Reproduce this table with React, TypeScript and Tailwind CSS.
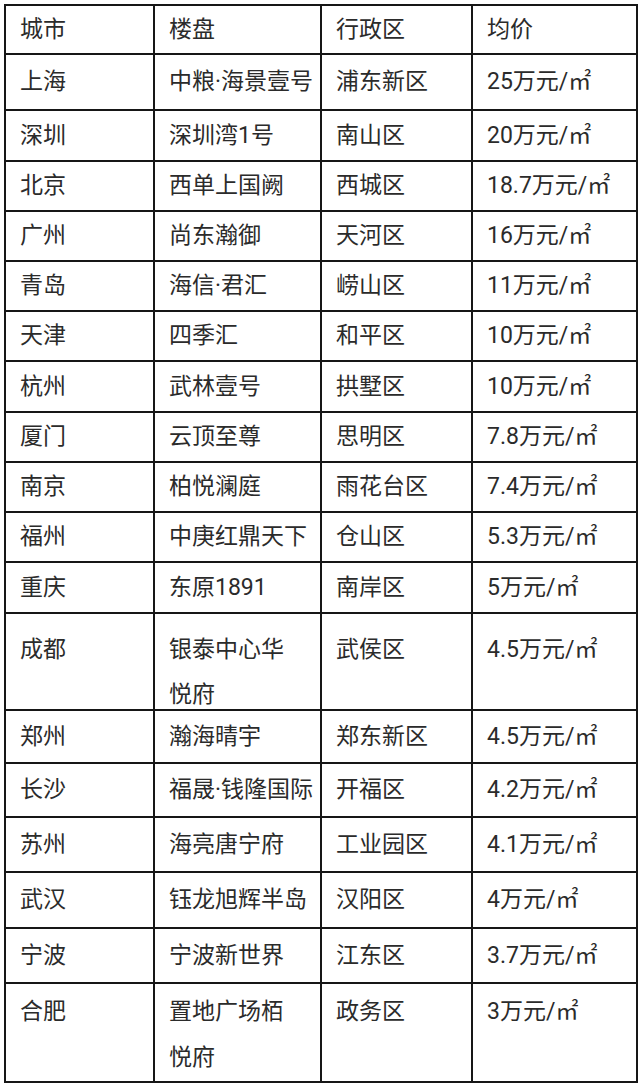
type Row = { h: string; cells: React.ReactNode[]; pad?: string };

const rows: Row[] = [
  { h: "h-[49px]", cells: ["城市", "楼盘", "行政区", "均价"] },
  { h: "h-[56px]", cells: ["上海", "中粮·海景壹号", "浦东新区", "25万元/㎡"] },
  { h: "h-[51px]", cells: ["深圳", "深圳湾1号", "南山区", "20万元/㎡"] },
  { h: "h-[50px]", cells: ["北京", "西单上国阙", "西城区", "18.7万元/㎡"] },
  { h: "h-[50px]", cells: ["广州", "尚东瀚御", "天河区", "16万元/㎡"] },
  { h: "h-[50px]", cells: ["青岛", "海信·君汇", "崂山区", "11万元/㎡"] },
  { h: "h-[50px]", cells: ["天津", "四季汇", "和平区", "10万元/㎡"] },
  { h: "h-[51px]", cells: ["杭州", "武林壹号", "拱墅区", "10万元/㎡"] },
  { h: "h-[50px]", cells: ["厦门", "云顶至尊", "思明区", "7.8万元/㎡"] },
  { h: "h-[50px]", cells: ["南京", "柏悦澜庭", "雨花台区", "7.4万元/㎡"] },
  { h: "h-[50px]", cells: ["福州", "中庚红鼎天下", "仓山区", "5.3万元/㎡"] },
  { h: "h-[51px]", cells: ["重庆", "东原1891", "南岸区", "5万元/㎡"] },
  {
    h: "h-[97px]",
    pad: "pt-[13px] leading-[45px]",
    cells: ["成都", <>银泰中心华<br />悦府</>, "武侯区", "4.5万元/㎡"],
  },
  { h: "h-[53px]", cells: ["郑州", "瀚海晴宇", "郑东新区", "4.5万元/㎡"] },
  { h: "h-[54px]", cells: ["长沙", "福晟·钱隆国际", "开福区", "4.2万元/㎡"] },
  { h: "h-[55px]", cells: ["苏州", "海亮唐宁府", "工业园区", "4.1万元/㎡"] },
  { h: "h-[56px]", cells: ["武汉", "钰龙旭辉半岛", "汉阳区", "4万元/㎡"] },
  { h: "h-[55px]", cells: ["宁波", "宁波新世界", "江东区", "3.7万元/㎡"] },
  {
    h: "h-[97px]",
    pad: "pt-[5px] leading-[46px]",
    cells: ["合肥", <>置地广场栢<br />悦府</>, "政务区", "3万元/㎡"],
  },
];

const colW = [
  "w-[149px] border-r-2",
  "w-[167px] border-r-2",
  "w-[151px] border-r-2",
  "flex-1",
];

export default function App() {
  return (
    <div
      className="w-[640px] h-[1083px] bg-white overflow-hidden pt-[4px] pl-[4px] text-[#2b2b2b] text-[23px]"
      style={{ fontFamily: 'Roboto, "Noto Sans CJK SC", sans-serif' }}
    >
      <div className="w-[634px] border-2 border-[#161616]">
        {rows.map((r, ri) => (
          <div
            key={ri}
            className={
              "flex border-[#161616] " +
              r.h +
              (ri < rows.length - 1 ? " border-b-2" : "")
            }
          >
            {r.cells.map((c, i) => (
              <div
                key={i}
                className={
                  "border-[#161616] pl-[14px] " +
                  colW[i] +
                  " " +
                  (r.pad ?? "flex items-center leading-[30px]")
                }
              >
                <div>{c}</div>
              </div>
            ))}
          </div>
        ))}
      </div>
    </div>
  );
}
